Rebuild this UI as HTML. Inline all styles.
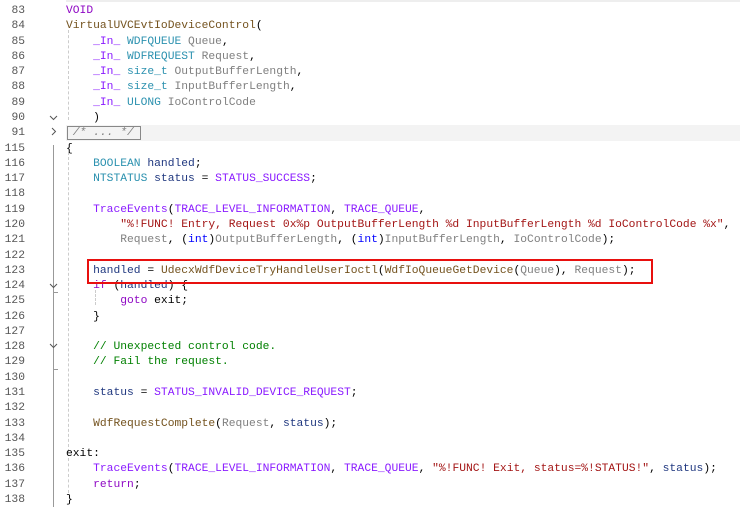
<!DOCTYPE html><html><head><style>
body{margin:0;width:740px;height:512px;background:#fff;overflow:hidden;position:relative;font-family:"Liberation Mono",monospace;font-size:11.3px}
.ln{position:absolute;left:0;width:25px;text-align:right;color:#555;top:4px;line-height:15.28px;white-space:pre}
pre{position:absolute;left:66px;top:4px;margin:0;font:inherit;line-height:15.28px;color:#000}
.k{color:#8f08c4}.t{color:#2b91af}.p{color:#808080}.s{color:#a31515}.c{color:#008000}.m{color:#8a1bff}.f{color:#74531f}.v{color:#1f377f}.b{color:#0000ff}
svg{position:absolute}
</style></head><body>
<div style="position:absolute;left:66px;top:0;width:674px;height:2px;background:#eee"></div>
<div style="position:absolute;left:66px;top:125px;width:674px;height:16px;background:#f3f3f3"></div>
<div style="position:absolute;left:67px;top:126px;width:74px;height:14px;border:1px solid #888;box-sizing:border-box"></div>
<div style="position:absolute;left:53px;top:145px;width:1px;height:362px;background:#999"></div>
<div style="position:absolute;left:53px;top:292px;width:5px;height:1px;background:#999"></div>
<div style="position:absolute;left:53px;top:369px;width:5px;height:1px;background:#999"></div>
<div style="position:absolute;left:68px;top:30px;width:0;height:90px;border-left:1px dashed #ccc"></div>
<div style="position:absolute;left:68px;top:152px;width:0;height:300px;border-left:1px dashed #ccc"></div>
<div style="position:absolute;left:68px;top:458px;width:0;height:35px;border-left:1px dashed #ccc"></div>
<div style="position:absolute;left:95px;top:290px;width:0;height:15px;border-left:1px dashed #ccc"></div>
<svg style="left:49px;top:114px" width="9" height="8"><polyline points="1,2 4.5,5.5 8,2" fill="none" stroke="#555" stroke-width="1"/></svg>
<svg style="left:50px;top:127px" width="8" height="10"><polyline points="2,1 5.5,4.5 2,8" fill="none" stroke="#555" stroke-width="1"/></svg>
<svg style="left:49px;top:282px" width="9" height="8"><polyline points="1,2 4.5,5.5 8,2" fill="none" stroke="#555" stroke-width="1"/></svg>
<svg style="left:49px;top:342px" width="9" height="8"><polyline points="1,2 4.5,5.5 8,2" fill="none" stroke="#555" stroke-width="1"/></svg>
<div class="ln">83
84
85
86
87
88
89
90
91
115
116
117
118
119
120
121
122
123
124
125
126
127
128
129
130
131
132
133
134
135
136
137
138</div>
<pre><span class="k">VOID</span>
<span class="f">VirtualUVCEvtIoDeviceControl</span>(
    <span class="m">_In_</span> <span class="t">WDFQUEUE</span> <span class="p">Queue</span>,
    <span class="m">_In_</span> <span class="t">WDFREQUEST</span> <span class="p">Request</span>,
    <span class="m">_In_</span> <span class="t">size_t</span> <span class="p">OutputBufferLength</span>,
    <span class="m">_In_</span> <span class="t">size_t</span> <span class="p">InputBufferLength</span>,
    <span class="m">_In_</span> <span class="t">ULONG</span> <span class="p">IoControlCode</span>
    )
 <span class="p"><i>/* ... */</i></span>
{
    <span class="t">BOOLEAN</span> <span class="v">handled</span>;
    <span class="t">NTSTATUS</span> <span class="v">status</span> = <span class="m">STATUS_SUCCESS</span>;

    <span class="m">TraceEvents</span>(<span class="m">TRACE_LEVEL_INFORMATION</span>, <span class="m">TRACE_QUEUE</span>,
        <span class="s">"%!FUNC! Entry, Request 0x%p OutputBufferLength %d InputBufferLength %d IoControlCode %x"</span>,
        <span class="p">Request</span>, (<span class="b">int</span>)<span class="p">OutputBufferLength</span>, (<span class="b">int</span>)<span class="p">InputBufferLength</span>, <span class="p">IoControlCode</span>);

    <span class="v">handled</span> = <span class="f">UdecxWdfDeviceTryHandleUserIoctl</span>(<span class="f">WdfIoQueueGetDevice</span>(<span class="p">Queue</span>), <span class="p">Request</span>);
    <span class="k">if</span> (<span class="v">handled</span>) {
        <span class="k">goto</span> exit;
    }

    <span class="c">// Unexpected control code.</span>
    <span class="c">// Fail the request.</span>

    <span class="v">status</span> = <span class="m">STATUS_INVALID_DEVICE_REQUEST</span>;

    <span class="f">WdfRequestComplete</span>(<span class="p">Request</span>, <span class="v">status</span>);

exit:
    <span class="m">TraceEvents</span>(<span class="m">TRACE_LEVEL_INFORMATION</span>, <span class="m">TRACE_QUEUE</span>, <span class="s">"%!FUNC! Exit, status=%!STATUS!"</span>, <span class="v">status</span>);
    <span class="k">return</span>;
}</pre>
<div style="position:absolute;left:87px;top:259px;width:566px;height:25px;border:2px solid #e8100e;box-sizing:border-box"></div>
</body></html>
